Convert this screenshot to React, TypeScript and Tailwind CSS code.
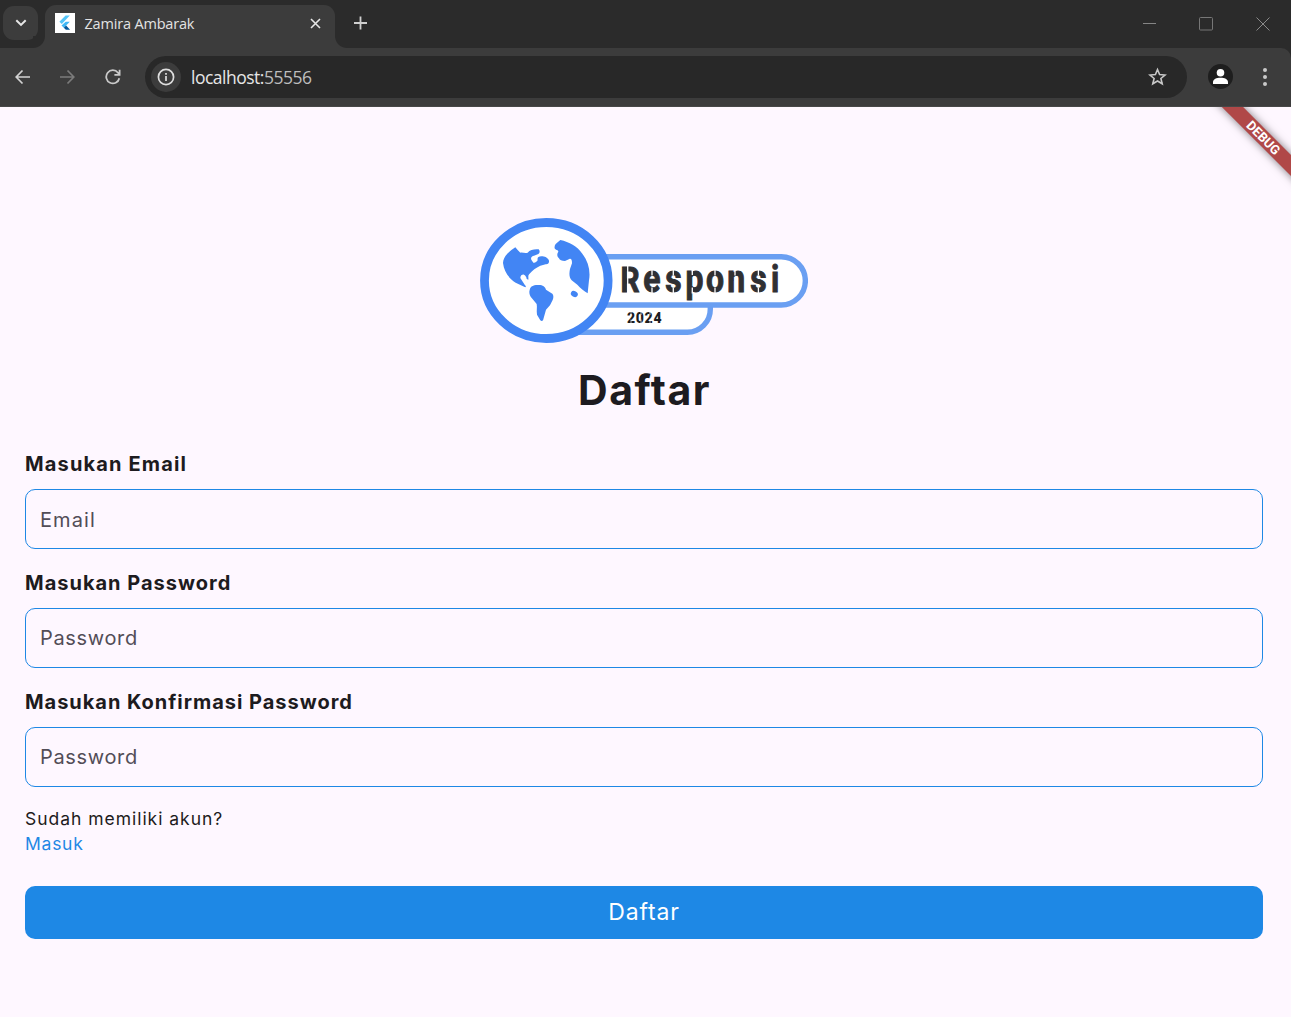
import React from "react";

function TabStrip() {
  return (
    <div className="flex h-12 items-start bg-[#2b2b2b]">
      <div className="mt-1.5 ml-[3px] flex h-[34px] w-[35px] items-center justify-center rounded-[11px] bg-[#3c3c3c]">
        <svg width="12" height="8" viewBox="0 0 12 8" fill="none" stroke="#e6e6e6" strokeWidth="2">
          <path d="M1.3 1.2 6 5.9l4.7-4.7" />
        </svg>
      </div>
      <div className="relative mt-[5px] ml-[7px] flex h-[43px] w-[290px] items-center rounded-t-[11px] bg-[#3c3c3c] pb-[7px] pl-2.5">
        <span className="absolute bottom-0 -left-3 size-3 bg-[radial-gradient(circle_at_0_0,#2b2b2b_11.5px,#3c3c3c_12.5px)]" />
        <span className="absolute -right-3 bottom-0 size-3 bg-[radial-gradient(circle_at_100%_0,#2b2b2b_11.5px,#3c3c3c_12.5px)]" />
        <svg width="20" height="20" viewBox="0 0 20 20">
          <path fill="#fff" d="M0 0h20v20H0z" />
          <path fill="#54c5f8" d="M10.600 2.500h4.200L6.800 11 4.400 8.700z" />
          <path fill="#40b8f5" d="M10.700 8.700h4.100l-3.700 3.700-2.300 2.300-2.300-2.300z" />
          <path fill="#01579b" d="m8.800 14.700 2.300-2.300 4 4.300h-4.200z" />
        </svg>
        <span className="mt-px ml-[9.500px] whitespace-nowrap font-['Open_Sans',sans-serif] text-[14.500px] leading-5 tracking-[-0.180px] text-[#e3e3e3]">Zamira Ambarak</span>
        <svg className="absolute top-[13px] left-[264.500px]" width="11" height="11" viewBox="0 0 11 11" stroke="#e6e6e6" strokeWidth="1.600">
          <path d="m1 1 9 9M10 1l-9 9" />
        </svg>
      </div>
      <svg className="mt-4 ml-[19px]" width="13" height="14" viewBox="0 0 13 14" stroke="#cfcfcf" strokeWidth="1.800">
        <path d="M6.500.5v13M0 7h13" />
      </svg>
      <div className="mt-[17px] mr-[21px] ml-auto flex items-center gap-[43px]">
        <svg width="13" height="14" viewBox="0 0 13 14" stroke="#858585"><path d="M0 6.500h13" /></svg>
        <svg width="14" height="14" viewBox="0 0 14 14" stroke="#777" fill="none"><rect x=".5" y=".5" width="13" height="12.500" rx="1" /></svg>
        <svg width="14" height="14" viewBox="0 0 14 14" stroke="#8a8a8a"><path d="m.5.5 13 13M13.500.5l-13 13" /></svg>
      </div>
    </div>
  );
}

function Toolbar() {
  return (
    <div className="bg-[#2b2b2b]">
      <div className="flex h-[59px] items-center rounded-tr-[10px] border-b border-[#474747] bg-[#3c3c3c] pb-px">
        <svg className="ml-[15px]" width="16" height="16" viewBox="0 0 16 16" fill="none" stroke="#d2d2d2" strokeWidth="1.700"><path d="M15 8H1.300M7.500 1.500 1.200 8l6.300 6.500" /></svg>
        <svg className="ml-[28px]" width="16" height="16" viewBox="0 0 16 16" fill="none" stroke="#7b7b7b" strokeWidth="1.700"><path d="M1 8h13.700M8.500 1.500 14.800 8l-6.300 6.500" /></svg>
        <svg className="ml-[30px]" width="16" height="16" viewBox="0 0 16 16" fill="none" stroke="#c9c9c9" strokeWidth="1.800"><path d="M14.300 9.200A6.600 6.600 0 1 1 13 3.700l1.200 1.500M14.600.7v5.200H9.400" /></svg>
        <div className="ml-6 flex h-[42px] w-[1042px] items-center rounded-full bg-[#282828] pr-5 pl-1.5">
          <span className="flex size-[30px] items-center justify-center rounded-full bg-[#3c3c3c]">
            <svg width="18" height="18" viewBox="0 0 18 18" fill="none" stroke="#dedede" strokeWidth="1.700"><circle cx="9" cy="9" r="7.600" /><path d="M9 8v5M9 4.900v1.800" /></svg>
          </span>
          <span className="mt-px ml-2.5 whitespace-nowrap font-['Open_Sans',sans-serif] text-[17.500px] leading-6 tracking-[-0.500px] text-[#e6e6e6]">localhost:<span className="text-[#bdbdbd]">55556</span></span>
          <svg className="ml-auto" width="19" height="19" viewBox="0 0 19 19" fill="none" stroke="#c7c7c7" strokeWidth="1.600"><path d="m9.500 2.500 2.100 5 5.400.5-4.100 3.500 1.300 5.300-4.700-2.800-4.700 2.800 1.300-5.300L2 8l5.400-.5z" /></svg>
        </div>
        <svg className="ml-[21px]" width="25" height="25" viewBox="0 0 25 25"><circle cx="12.500" cy="12.500" r="12.500" fill="#1e1e1e" /><circle cx="12.500" cy="8.700" r="3.800" fill="#fff" /><path fill="#fff" d="M5 20v-1.800c0-3 3.500-4.400 7.500-4.400s7.500 1.400 7.500 4.400V20z" /></svg>
        <svg className="ml-[30px]" width="4" height="18" viewBox="0 0 4 18" fill="#c9c9c9"><circle cx="2" cy="2" r="2" /><circle cx="2" cy="9" r="2" /><circle cx="2" cy="16" r="2" /></svg>
      </div>
    </div>
  );
}

function Logo() {
  return (
    <svg className="block" width="328" height="125" viewBox="480 218 328 125">
      <g fill="#fff" stroke="#6a9ff2" strokeWidth="5.400">
        <path d="M570 300H710.300V309A23 23 0 0 1 687.300 332.300H570z" />
        <path d="M580 256.700H781.200A24.150 24.150 0 0 1 781.200 305H580z" />
      </g>
      <ellipse cx="546.300" cy="280.500" rx="61.800" ry="58" fill="#fff" stroke="#4285f4" strokeWidth="8.800" />
      <g transform="translate(470 210) scale(.33333)" fill="#4285f4">
        <path d="M136 112C116 125 100 139 99 159C102 183 114 203 137 218L164 231C168 233 169 228 165 226L151 204C151 196 157 193 162 194C167 197 170 202 170 207L175 209C176 203 173 197 178 192C188 181 197 173 211 167L227 163C234 164 238 158 237 152C234 143 224 139 214 139C205 139 201 143 203 151C199 157 194 160 190 158L184 149C181 143 186 138 192 137L205 132C210 129 210 121 206 118C195 117 180 118 173 128C166 130 158 127 151 128L143 120z" />
        <path d="M179 240C181 228 191 224 207 225C218 225 226 231 228 239L247 251C251 256 251 263 248 270L240 286L228 299L220 328C219 334 213 334 210 329L201 314C199 300 202 292 200 282L182 260C178 254 177 246 179 240z" />
        <path d="M257 102L271 90C298 96 321 108 337 131C355 155 362 183 357 211L353 250C342 242 331 235 322 224L305 211C296 200 298 187 300 177L306 160C306 150 304 145 298 147L285 153C275 153 269 151 267 145C261 139 260 132 265 125C265 119 256 121 254 115C253 111 254 106 257 102z" />
        <ellipse cx="313" cy="252" rx="11" ry="8.500" transform="rotate(30 313 252)" />
      </g>
      <g transform="translate(620 292.300) scale(.84 1)">
        <text y="0" textAnchor="middle" fontFamily="Roboto, sans-serif" fontWeight="700" fontSize="37" fill="#2f3033" stroke="#2f3033" strokeWidth="1">
          <tspan x="12" fontSize="35.500">R</tspan>
          <tspan x="37.900 63.500 88.600 113.100 138.400 164.800" fontSize="38">espons</tspan>
          <tspan x="184.700" fontSize="37">i</tspan>
        </text>
      </g>
      <g stroke="#fff" strokeWidth="1.300">
        <path d="M627.700 264v29M652 270v5.500M652 287.500v6M673.300 270v5.500M673.300 287.500v6M692.300 270v5M692.300 287.500v6M715 270v5.500M715 287.500v6M735 270v5.500M758.400 270v5.500M758.400 287.500v6" />
      </g>
      <text x="627" y="323" textLength="34.500" fontFamily="Roboto, sans-serif" fontWeight="900" fontSize="14" fill="#1d1d1f">2024</text>
      <path d="M631 312v3M631 319.500v4M641 312v3M641 319.500v4M650 312v3M650 319.500v4" stroke="#fff" strokeWidth=".7" />
    </svg>
  );
}

function Field({ label, placeholder, labelClass, placeholderClass }: { label: string; placeholder: string; labelClass: string; placeholderClass: string }) {
  return (
    <label className="block h-[118.750px]">
      <span className={`block h-[35px] whitespace-nowrap text-[20px] leading-[21.800px] font-bold text-[#1d1b20] ${labelClass}`}>{label}</span>
      <span className="flex h-[60px] items-center rounded-[10px] border-[1.250px] border-[#1e88e5] pt-px pl-3.5">
        <span className={`whitespace-nowrap text-[20px] leading-7 text-[#524d57] ${placeholderClass}`}>{placeholder}</span>
      </span>
    </label>
  );
}

export default function App() {
  return (
    <div className="h-[1017px] w-[1291px] overflow-hidden bg-[#fef7ff] font-['Inter',sans-serif]">
      <TabStrip />
      <Toolbar />
      <main className="relative flex h-[910px] flex-col overflow-hidden pt-[111px] pr-7 pl-[25px]">
        <div className="absolute top-[22.500px] right-[-72px] flex h-[15px] w-[200px] rotate-45 items-center justify-center bg-[#b04848] pl-px font-['Roboto',sans-serif] text-[13px] leading-none font-bold text-white shadow-[0_0_8px_rgba(0,0,0,0.5)]">DEBUG</div>
        <div className="self-center"><Logo /></div>
        <h1 className="mt-[22px] self-center pl-px text-[41px] leading-[50px] font-bold tracking-[1.500px] text-[#1d1b20]">Daftar</h1>
        <div className="mt-[39px]">
          <Field label="Masukan Email" placeholder="Email" labelClass="tracking-[1.150px]" placeholderClass="tracking-[1.100px]" />
          <Field label="Masukan Password" placeholder="Password" labelClass="tracking-[1.000px]" placeholderClass="tracking-[0.660px]" />
          <Field label="Masukan Konfirmasi Password" placeholder="Password" labelClass="tracking-[0.970px]" placeholderClass="tracking-[0.660px]" />
        </div>
        <div className="-mt-1 text-[17.500px] leading-[25px]">
          <p className="tracking-[0.970px] text-[#1d1b20]">Sudah memiliki akun?</p>
          <a className="block tracking-[0.750px] text-[#1e88e5]">Masuk</a>
        </div>
        <button className="mt-[30px] h-[53px] w-full shrink-0 rounded-[10px] bg-[#1e88e5] pb-0.5 text-[23px] tracking-[0.800px] text-white">Daftar</button>
      </main>
    </div>
  );
}
